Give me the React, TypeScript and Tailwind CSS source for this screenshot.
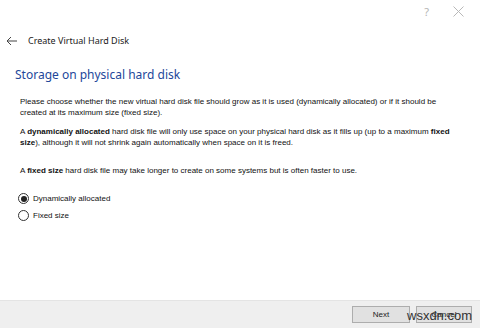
export default function App() {
  return (
    <div className="relative w-[480px] h-[328px] bg-white flex flex-col overflow-hidden font-['Noto_Sans',sans-serif]">
      {/* Barra de título */}
      <div className="h-[22px] flex justify-end items-center gap-[24px] pr-[16px] text-[#b4b4b4]">
        <span className="text-[11px] leading-none">?</span>
        <svg width="11" height="11" viewBox="0 0 11 11" stroke="#b8b8b8" strokeWidth="1">
          <path d="M0.5 0.5 L10.5 10.5 M10.5 0.5 L0.5 10.5" />
        </svg>
      </div>

      <div className="flex items-center h-[38px] pl-[6px]">
        <svg width="12" height="10" viewBox="0 0 12 10" fill="none" stroke="#444" strokeWidth="1">
          <path d="M11 5 H1 M5 1 L1 5 L5 9" />
        </svg>
        <span className="ml-[10px] text-[9px] text-[#1a1a1a]">Create Virtual Hard Disk</span>
      </div>

      <div className="pl-[15px] h-[30px] flex items-center text-[12px] text-[#23479a]">
        Storage on physical hard disk
      </div>

      <div className="flex-1 pl-[20px] pr-[16px] pt-[6px] text-[8px] leading-[11px] text-[#111] font-['Liberation_Sans',sans-serif]">
        <p>
          Please choose whether the new virtual hard disk file should grow as it is used (dynamically allocated) or if it should be
          created at its maximum size (fixed size).
        </p>
        <p className="mt-[8px]">
          A <b>dynamically allocated</b> hard disk file will only use space on your physical hard disk as it fills up (up to a maximum <b>fixed</b>{' '}
          <b>size</b>), although it will not shrink again automatically when space on it is freed.
        </p>
        <p className="mt-[17px]">
          A <b>fixed size</b> hard disk file may take longer to create on some systems but is often faster to use.
        </p>

        <div className="mt-[17px] -ml-[2px] flex flex-col gap-[6px]">
          <label className="flex items-center gap-[4px]">
            <span className="w-[11px] h-[11px] rounded-full border border-[#333] flex items-center justify-center">
              <span className="w-[6px] h-[6px] rounded-full bg-[#222]" />
            </span>
            Dynamically allocated
          </label>
          <label className="flex items-center gap-[4px]">
            <span className="w-[11px] h-[11px] rounded-full border border-[#333]" />
            Fixed size
          </label>
        </div>
      </div>

      <div className="h-[28px] bg-[#efefef] border-t border-[#e4e4e4] flex justify-end items-center gap-[6px] pr-[8px] text-[8px] text-[#222] font-['Liberation_Sans',sans-serif]">
        <button className="w-[58px] h-[17px] bg-[#e1e1e1] border border-[#adadad]">Next</button>
        <button className="w-[56px] h-[17px] bg-[#e1e1e1] border border-[#adadad]">Cancel</button>
      </div>

      <span className="absolute left-[407px] top-[306px] text-[13px] text-[#333] font-['Liberation_Sans',sans-serif]">
        wsxdn.com
      </span>
    </div>
  );
}
